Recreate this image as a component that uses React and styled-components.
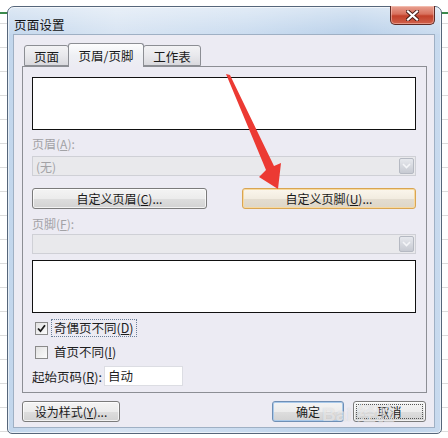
import styled, { createGlobalStyle } from "styled-components";

const GlobalStyle = createGlobalStyle`
	html, body {
		margin: 0;
		padding: 0;
		background: #fff;
	}
	body {
		font-family: "Noto Sans CJK SC", "Liberation Sans", sans-serif;
		font-size: 12px;
		color: #1e1e1e;
	}
`;

const Page = styled.div`
	position: relative;
	width: 448px;
	height: 438px;
	box-sizing: border-box;
	padding: 6px 6px 0 7px;
	overflow: hidden;
	background-image: linear-gradient(
			to bottom,
			transparent 12px,
			#3b8a4c 12px,
			#3b8a4c 14px,
			transparent 14px
		),
		repeating-linear-gradient(to bottom, #fff 0 23px, #dcdcdc 23px 24px);
`;

const Window = styled.div`
	width: 435px;
	height: 428px;
	box-sizing: border-box;
	display: flex;
	flex-direction: column;
	padding: 0 6px 5px 5px;
	border: 1px solid #56667a;
	border-radius: 7px 7px 5px 5px;
	background: linear-gradient(
		90deg,
		#c2d6ec 0%,
		#d6e3f2 25%,
		#c9dbef 55%,
		#b7cfe9 80%,
		#c8daee 100%
	);
	box-shadow: inset 0 0 0 1px rgba(255, 255, 255, 0.6);
`;

const TitleBar = styled.div`
	height: 27px;
	display: flex;
	align-items: flex-start;
	justify-content: space-between;
	background: linear-gradient(
		to bottom,
		rgba(255, 255, 255, 0.45),
		rgba(255, 255, 255, 0.05)
	);
	margin: 0 -6px 0 -5px;
	padding: 0 6px 0 6px;
	border-radius: 6px 6px 0 0;
`;

const Title = styled.div`
	margin-top: 8px;
	font-size: 12.5px;
	color: #111;
	letter-spacing: 0.2px;
`;

const CloseButton = styled.div`
	width: 45px;
	height: 19px;
	box-sizing: border-box;
	margin-top: -1px;
	display: flex;
	align-items: center;
	justify-content: center;
	border: 1px solid #5e2a24;
	border-top: none;
	border-radius: 0 0 5px 5px;
	background: linear-gradient(
		to bottom,
		#e9a393 0%,
		#d8705d 45%,
		#c2402a 55%,
		#d0614b 100%
	);
	box-shadow: inset 0 0 0 1px rgba(255, 220, 210, 0.45);
`;

const Client = styled.div`
	flex: 1;
	display: flex;
	flex-direction: column;
	box-sizing: border-box;
	padding: 8px 7px 0 8px;
	border: 1px solid #9fb0c4;
	background: #ecebf3;
`;

const TabStrip = styled.div`
	display: flex;
	align-items: flex-end;
	height: 23px;
	padding-left: 2px;
	position: relative;
	z-index: 1;
`;

const Tab = styled.div`
	width: ${({ $w }) => $w}px;
	height: ${({ $active }) => ($active ? 24 : 21)}px;
	margin-bottom: ${({ $active }) => ($active ? -1 : 0)}px;
	box-sizing: border-box;
	display: flex;
	align-items: center;
	justify-content: center;
	padding-top: ${({ $active }) => ($active ? 0 : 2)}px;
	border: 1px solid #8c8e94;
	border-bottom: ${({ $active }) => ($active ? "none" : "1px solid #8c8e94")};
	border-radius: 3px 3px 0 0;
	margin-left: ${({ $first }) => ($first ? 0 : -1)}px;
	font-size: 12.5px;
	color: #1a1a1a;
	background: ${({ $active }) =>
		$active
			? "linear-gradient(to bottom, #fdfdfe 0%, #eef0f4 50%, #ecebf3 100%)"
			: "linear-gradient(to bottom, #f3f3f5 0%, #e8e8ec 50%, #d9d9de 100%)"};
	position: relative;
	z-index: ${({ $active }) => ($active ? 2 : 1)};
`;

const Panel = styled.div`
	height: 327px;
	box-sizing: border-box;
	display: flex;
	flex-direction: column;
	padding: 10px 10px 0 9px;
	border: 1px solid #8c8e94;
	background: #ecebf3;
`;

const PreviewBox = styled.div`
	height: 53px;
	box-sizing: border-box;
	border: 1px solid #111;
	background: #fff;
	margin-top: ${({ $mt }) => $mt || 0}px;
`;

const FieldLabel = styled.div`
	height: 14px;
	line-height: 14px;
	margin-top: ${({ $mt }) => $mt}px;
	color: #a2a2a6;
`;

const Combo = styled.div`
	height: 20px;
	box-sizing: border-box;
	margin-top: ${({ $mt }) => $mt}px;
	display: flex;
	align-items: center;
	justify-content: space-between;
	padding: 0 1px 0 3px;
	border: 1px solid #cfd0d6;
	background: #e9e9ec;
	color: #a2a2a6;
`;

const DropButton = styled.div`
	width: 15px;
	height: 16px;
	box-sizing: border-box;
	display: flex;
	align-items: center;
	justify-content: center;
	border: 1px solid #b5b9c2;
	border-radius: 2px;
	background: linear-gradient(to bottom, #e6e8ed, #c7cad2);
`;

const ButtonRow = styled.div`
	display: flex;
	justify-content: space-between;
	margin-top: ${({ $mt }) => $mt}px;
`;

const Button = styled.button`
	width: ${({ $w }) => $w}px;
	height: 21px;
	box-sizing: border-box;
	padding: 0;
	font-family: inherit;
	font-size: 12px;
	color: #1a1a1a;
	border-radius: 3px;
	border: 1px solid
		${({ $tone }) =>
			$tone === "hot" ? "#d9a552" : $tone === "default" ? "#6f8fb5" : "#7b7b7b"};
	background: ${({ $tone }) =>
		$tone === "hot"
			? "linear-gradient(to bottom, #fbf6ec 0%, #f2ece0 50%, #e4ddd0 51%, #ddd6c8 100%)"
			: "linear-gradient(to bottom, #f4f4f4 0%, #ececec 50%, #dedede 51%, #d2d2d2 100%)"};
	box-shadow: ${({ $tone }) =>
		$tone === "hot"
			? "inset 0 0 0 1px #f7d99f"
			: $tone === "default"
			? "inset 0 0 0 1px #a9c9ea"
			: "inset 0 0 0 1px rgba(255,255,255,0.7)"};
	outline: ${({ $focus }) => ($focus ? "1px dotted #555" : "none")};
	outline-offset: -4px;
`;

const CheckRow = styled.div`
	height: 18px;
	margin-top: ${({ $mt }) => $mt}px;
	display: flex;
	align-items: center;
	padding-left: 3px;
	gap: 3px;
`;

const CheckBox = styled.div`
	width: 13px;
	height: 13px;
	box-sizing: border-box;
	display: flex;
	align-items: center;
	justify-content: center;
	border: 1px solid #8a8a8a;
	background: linear-gradient(135deg, #e2e2e2, #fbfbfb);
`;

const CheckText = styled.span`
	padding: 0 2px;
	line-height: 16px;
	border: 1px dotted ${({ $focus }) => ($focus ? "#6a7f98" : "transparent")};
	font-size: 12.5px;
`;

const StartRow = styled.div`
	display: flex;
	align-items: center;
	margin-top: 5px;
	gap: 2px;
	font-size: 12.5px;
`;

const TextInput = styled.div`
	width: 79px;
	height: 20px;
	box-sizing: border-box;
	padding-left: 3px;
	line-height: 18px;
	border: 1px solid #dcdde3;
	background: #fff;
`;

const BottomRow = styled.div`
	display: flex;
	justify-content: space-between;
	align-items: center;
	margin-top: 8px;
	padding-right: 1px;
`;

const ButtonGroup = styled.div`
	display: flex;
	gap: 9px;
`;

const Overlay = styled.svg`
	position: absolute;
	left: 0;
	top: 0;
	pointer-events: none;
`;

const Watermark = styled.div`
	position: absolute;
	left: 322px;
	top: 399px;
	font-family: "Liberation Sans", "Noto Sans CJK SC", sans-serif;
	font-size: 19px;
	font-weight: bold;
	color: rgba(255, 255, 255, 0.55);
	text-shadow: 0 0 1px rgba(120, 120, 130, 0.3);
	pointer-events: none;
`;

const Key = ({ k }) => (
	<>
		(<u>{k}</u>)
	</>
);

const Chevron = () => (
	<svg width="9" height="6" viewBox="0 0 9 6">
		<path d="M1 1 L4.5 4.5 L8 1" fill="none" stroke="#f4f5f8" strokeWidth="1.6" />
	</svg>
);

const App = () => {
	return (
		<>
			<GlobalStyle />
			<Page>
				<Window>
					<TitleBar>
						<Title>页面设置</Title>
						<CloseButton>
							<svg width="13" height="11" viewBox="0 0 13 11">
								<path
									d="M2 1.5 L11 9.5 M11 1.5 L2 9.5"
									stroke="#4a1d17"
									strokeWidth="4"
									strokeLinecap="square"
								/>
								<path
									d="M2 1.5 L11 9.5 M11 1.5 L2 9.5"
									stroke="#fff"
									strokeWidth="2.2"
									strokeLinecap="square"
								/>
							</svg>
						</CloseButton>
					</TitleBar>
					<Client>
						<TabStrip>
							<Tab $w={45} $first>
								页面
							</Tab>
							<Tab $w={76} $active>
								页眉/页脚
							</Tab>
							<Tab $w={58}>工作表</Tab>
						</TabStrip>
						<Panel>
							<PreviewBox />
							<FieldLabel $mt={7}>
								页眉<Key k="A" />:
							</FieldLabel>
							<Combo $mt={5}>
								<span>(无)</span>
								<DropButton>
									<Chevron />
								</DropButton>
							</Combo>
							<ButtonRow $mt={12}>
								<Button $w={175}>
									自定义页眉<Key k="C" />...
								</Button>
								<Button $w={174} $tone="hot">
									自定义页脚<Key k="U" />...
								</Button>
							</ButtonRow>
							<FieldLabel $mt={8}>
								页脚<Key k="F" />:
							</FieldLabel>
							<Combo $mt={3}>
								<span />
								<DropButton>
									<Chevron />
								</DropButton>
							</Combo>
							<PreviewBox $mt={6} />
							<CheckRow $mt={6}>
								<CheckBox>
									<svg width="9" height="9" viewBox="0 0 9 9">
										<path
											d="M1 4.5 L3.5 7.2 L8 1.2"
											fill="none"
											stroke="#1a1a1a"
											strokeWidth="1.8"
										/>
									</svg>
								</CheckBox>
								<CheckText $focus>
									奇偶页不同<Key k="D" />
								</CheckText>
							</CheckRow>
							<CheckRow $mt={6}>
								<CheckBox />
								<CheckText>
									首页不同<Key k="I" />
								</CheckText>
							</CheckRow>
							<StartRow>
								<span>
									起始页码<Key k="R" />:
								</span>
								<TextInput>自动</TextInput>
							</StartRow>
						</Panel>
						<BottomRow>
							<Button $w={98}>
								设为样式<Key k="Y" />...
							</Button>
							<ButtonGroup>
								<Button $w={72} $tone="default">
									确定
								</Button>
								<Button $w={73} $focus>
									取消
								</Button>
							</ButtonGroup>
						</BottomRow>
					</Client>
				</Window>
				<Watermark>Bai 经验</Watermark>
				<Overlay width="448" height="438" viewBox="0 0 448 438">
					<polygon
						points="226,74 230,75 274,166 281,163 278,189 259,177 266,170"
						fill="#ec3a33"
					/>
				</Overlay>
			</Page>
		</>
	);
};

export default App;
